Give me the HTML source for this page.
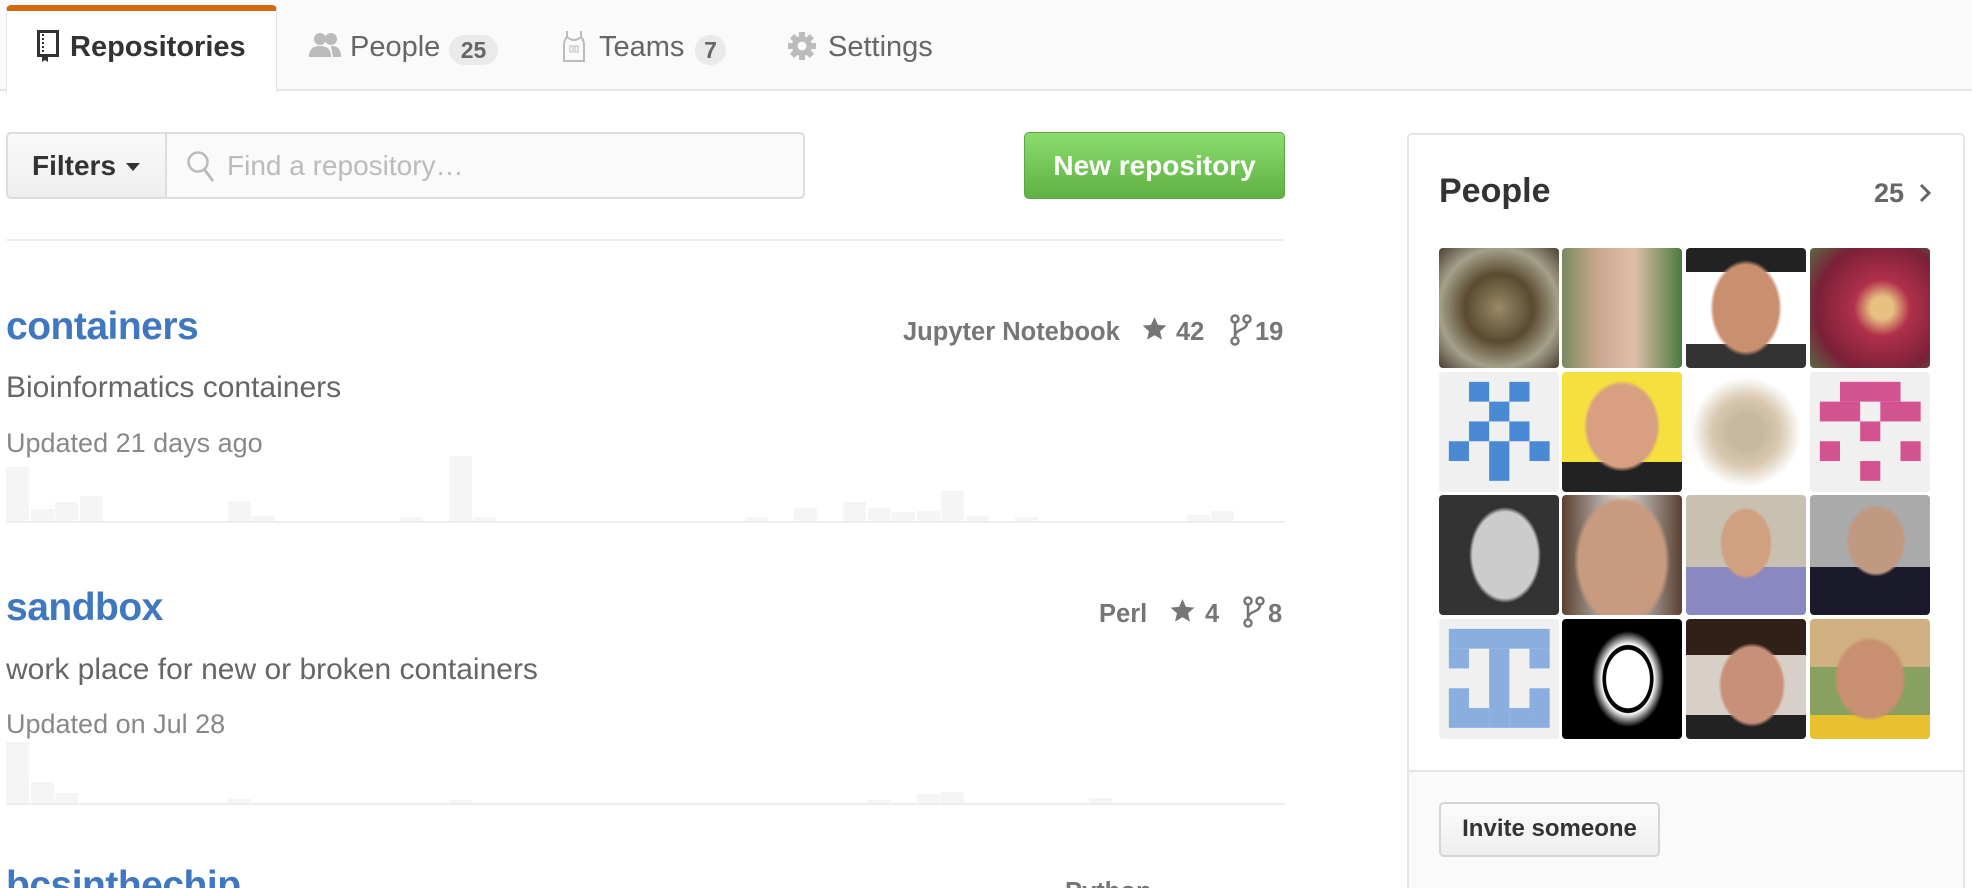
<!DOCTYPE html>
<html><head><meta charset="utf-8"><style>
*{box-sizing:border-box;margin:0;padding:0}
html,body{width:1972px;height:888px;overflow:hidden}
body{background:#fff;font-family:"Liberation Sans",Arial,sans-serif;position:relative;color:#333}
.a{position:absolute;white-space:nowrap}
.tabbar{position:absolute;left:0;top:0;width:1972px;height:91px;background:#fafafa;border-bottom:2px solid #e5e5e5}
.tab{position:absolute;left:6px;top:5px;width:271px;height:88px;background:#fff;border:1px solid #e5e5e5;border-bottom:none;border-top:6px solid #d26911;border-radius:5px 5px 0 0}
.tt{font-size:29px;color:#666;top:31px}
.cnt{background:#eaeaea;border-radius:20px;font-size:23px;font-weight:bold;color:#666;top:35px;height:30px;line-height:30px;text-align:center}
.title{color:#4078c0;font-size:39px;font-weight:bold;letter-spacing:-0.5px}
.desc{font-size:30px;color:#666}
.upd{font-size:27px;color:#888}
.meta{font-size:25.5px;font-weight:bold;color:#767676}
.bar{position:absolute;background:#f5f5f5;width:23px}
.hr{position:absolute;left:6px;width:1279px;height:2px;background:#eee}
</style></head><body>
<div class="tabbar"></div>
<div class="tab"></div>
<svg class="a" style="left:37px;top:30px" width="22" height="32" viewBox="0 0 22 32"><rect x="1.5" y="1.5" width="19" height="24" fill="none" stroke="#333" stroke-width="3"/><line x1="6" y1="4" x2="6" y2="22" stroke="#333" stroke-width="2" stroke-dasharray="2 2"/><path d="M5 25v7l3-2 3 2v-7" fill="#333"/></svg>
<div class="a tt" style="left:70px;font-weight:bold;color:#333">Repositories</div>
<svg class="a" style="left:309px;top:31px" width="32" height="28" viewBox="0 0 32 28"><circle cx="11" cy="8" r="6" fill="#bbb"/><circle cx="22" cy="8" r="6" fill="#bbb"/><path d="M0 26c0-8 4-11 11-11s11 3 11 11z M22 15c7 0 10 3 10 11h-8z" fill="#bbb"/></svg>
<div class="a tt" style="left:350px">People</div>
<div class="a cnt" style="left:449px;width:49px">25</div>
<svg class="a" style="left:563px;top:30px" width="22" height="32" viewBox="0 0 22 32"><path d="M4 1v6q-3 3-3 8v16h20V15q0-5-3-8V1M4 7q7 6 14 0" fill="none" stroke="#bbb" stroke-width="2"/><rect x="7" y="16" width="3" height="6" fill="none" stroke="#bbb"/><rect x="12" y="16" width="3" height="6" fill="none" stroke="#bbb"/></svg>
<div class="a tt" style="left:599px">Teams</div>
<div class="a cnt" style="left:695px;width:31px">7</div>
<svg class="a" style="left:788px;top:32px" width="28" height="28" viewBox="0 0 28 28"><g fill="#bbb"><circle cx="14" cy="14" r="10"/><rect x="11" y="0" width="6" height="28"/><rect x="0" y="11" width="28" height="6"/><rect x="11" y="0" width="6" height="28" transform="rotate(45 14 14)"/><rect x="11" y="0" width="6" height="28" transform="rotate(-45 14 14)"/></g><circle cx="14" cy="14" r="4.5" fill="#fafafa"/></svg>
<div class="a tt" style="left:828px">Settings</div>

<div class="a" style="left:6px;top:132px;width:799px;height:67px;border:2px solid #ddd;border-radius:5px;background:#fafafa"></div>
<div class="a" style="left:6px;top:132px;width:161px;height:67px;border:2px solid #ddd;border-radius:5px 0 0 5px;background:linear-gradient(#fafafa,#eee)"></div>
<div class="a" style="left:32px;top:150px;font-size:28px;font-weight:bold;color:#333">Filters</div>
<svg class="a" style="left:126px;top:163px" width="14" height="8"><path d="M0 0h14L7 8z" fill="#333"/></svg>
<svg class="a" style="left:186px;top:150px" width="30" height="34" viewBox="0 0 30 34"><circle cx="12" cy="12" r="9.5" fill="none" stroke="#bbb" stroke-width="2.5"/><path d="M18 19l9 12" stroke="#bbb" stroke-width="3"/></svg>
<div class="a" style="left:227px;top:150px;font-size:28px;color:#bbb">Find a repository…</div>

<div class="a" style="left:1024px;top:132px;width:261px;height:67px;border:1px solid #5aa745;border-radius:5px;background:linear-gradient(#8add6d,#60b044)"></div>
<div class="a" style="left:1024px;top:150px;width:261px;text-align:center;font-size:28px;font-weight:bold;color:#fff">New repository</div>

<div class="hr" style="top:239px"></div>

<div class="a title" style="left:6px;top:305px">containers</div>
<div class="a meta" style="left:903px;top:318px">Jupyter Notebook</div>
<svg class="a" style="left:1141px;top:316px" width="27" height="26" viewBox="0 0 24 24"><path d="M12 1l3.2 7.2 7.8.7-5.9 5.2 1.8 7.7L12 17.8 5.1 21.8l1.8-7.7L1 8.9l7.8-.7z" fill="#767676"/></svg>
<div class="a meta" style="left:1176px;top:318px">42</div>
<svg class="a" style="left:1230px;top:314px" width="22" height="32" viewBox="0 0 22 32"><g fill="none" stroke="#767676" stroke-width="2.5"><circle cx="5" cy="5" r="3.5"/><circle cx="17" cy="5" r="3.5"/><circle cx="5" cy="27" r="3.5"/><path d="M5 9v14M17 9c0 8-12 5-12 14"/></g></svg>
<div class="a meta" style="left:1255px;top:318px">19</div>
<div class="a desc" style="left:6px;top:371px">Bioinformatics containers</div>
<div class="a upd" style="left:6px;top:428px">Updated 21 days ago</div>
<div class="bar" style="left:6px;top:467px;height:54px"></div>
<div class="bar" style="left:31px;top:509px;height:12px"></div>
<div class="bar" style="left:55px;top:502px;height:19px"></div>
<div class="bar" style="left:80px;top:496px;height:25px"></div>
<div class="bar" style="left:228px;top:501px;height:20px"></div>
<div class="bar" style="left:252px;top:516px;height:5px"></div>
<div class="bar" style="left:400px;top:517px;height:4px"></div>
<div class="bar" style="left:449px;top:456px;height:65px"></div>
<div class="bar" style="left:473px;top:517px;height:4px"></div>
<div class="bar" style="left:745px;top:517px;height:4px"></div>
<div class="bar" style="left:794px;top:508px;height:13px"></div>
<div class="bar" style="left:843px;top:502px;height:19px"></div>
<div class="bar" style="left:868px;top:508px;height:13px"></div>
<div class="bar" style="left:892px;top:512px;height:9px"></div>
<div class="bar" style="left:917px;top:511px;height:10px"></div>
<div class="bar" style="left:941px;top:491px;height:30px"></div>
<div class="bar" style="left:966px;top:516px;height:5px"></div>
<div class="bar" style="left:1015px;top:517px;height:4px"></div>
<div class="bar" style="left:1187px;top:515px;height:6px"></div>
<div class="bar" style="left:1211px;top:511px;height:10px"></div>
<div class="hr" style="top:521px"></div>

<div class="a title" style="left:6px;top:586px">sandbox</div>
<div class="a meta" style="left:1099px;top:600px">Perl</div>
<svg class="a" style="left:1169px;top:598px" width="27" height="26" viewBox="0 0 24 24"><path d="M12 1l3.2 7.2 7.8.7-5.9 5.2 1.8 7.7L12 17.8 5.1 21.8l1.8-7.7L1 8.9l7.8-.7z" fill="#767676"/></svg>
<div class="a meta" style="left:1205px;top:600px">4</div>
<svg class="a" style="left:1243px;top:596px" width="22" height="32" viewBox="0 0 22 32"><g fill="none" stroke="#767676" stroke-width="2.5"><circle cx="5" cy="5" r="3.5"/><circle cx="17" cy="5" r="3.5"/><circle cx="5" cy="27" r="3.5"/><path d="M5 9v14M17 9c0 8-12 5-12 14"/></g></svg>
<div class="a meta" style="left:1268px;top:600px">8</div>
<div class="a desc" style="left:6px;top:653px">work place for new or broken containers</div>
<div class="a upd" style="left:6px;top:709px">Updated on Jul 28</div>
<div class="bar" style="left:6px;top:742px;height:61px"></div>
<div class="bar" style="left:31px;top:782px;height:21px"></div>
<div class="bar" style="left:55px;top:793px;height:10px"></div>
<div class="bar" style="left:228px;top:799px;height:4px"></div>
<div class="bar" style="left:449px;top:800px;height:3px"></div>
<div class="bar" style="left:868px;top:800px;height:3px"></div>
<div class="bar" style="left:917px;top:794px;height:9px"></div>
<div class="bar" style="left:941px;top:792px;height:11px"></div>
<div class="bar" style="left:1089px;top:798px;height:5px"></div>
<div class="hr" style="top:803px"></div>

<div class="a title" style="left:6px;top:864px">bcsinthechip</div>
<div class="a meta" style="left:1065px;top:878px">Python</div>

<div class="a" style="left:1407px;top:133px;width:558px;height:770px;border:2px solid #e5e5e5;border-radius:5px;background:#fff;overflow:hidden">
<div style="position:absolute;left:0;top:635px;width:100%;height:200px;background:#fafafa;border-top:2px solid #e5e5e5"></div>
</div>
<div class="a" style="left:1439px;top:172px;font-size:34px;font-weight:bold;color:#333">People</div>
<div class="a" style="left:1874px;top:178px;font-size:27px;font-weight:bold;color:#666">25</div>
<svg class="a" style="left:1918px;top:183px" width="14" height="20"><path d="M3 2l8 8-8 8" fill="none" stroke="#666" stroke-width="3"/></svg>

<div class="a" style="left:1439px;top:248px;width:120px;height:120px;border-radius:4px;background:radial-gradient(circle at 50% 50%,#9a8a6a,#5a4a30 40%,#a4a08a 70%,#4a4030)"></div>
<div class="a" style="left:1562px;top:248px;width:120px;height:120px;border-radius:4px;background:linear-gradient(90deg,#7a8a60,#c9a890 30%,#e0bfa8 60%,#4a7a40)"></div>
<div class="a" style="left:1686px;top:248px;width:120px;height:120px;border-radius:4px;background:radial-gradient(ellipse 30% 40% at 50% 50%,#c99070 90%,transparent 100%),linear-gradient(#222 20%,#fff 20%,#fff 80%,#333 80%)"></div>
<div class="a" style="left:1810px;top:248px;width:120px;height:120px;border-radius:4px;background:radial-gradient(circle at 60% 50%,#e8c080 12%,#b0304a 30%,#7a2038 70%,#5a6a40)"></div>

<svg class="a" style="left:1439px;top:372px" width="120" height="120" viewBox="0 0 10 10"><rect width="10" height="10" rx=".3" fill="#f0f0f0"/><g fill="#4a89d4"><rect x="2.5" y="0.82" width="1.68" height="1.65"/><rect x="5.86" y="0.82" width="1.68" height="1.65"/><rect x="4.18" y="2.47" width="1.68" height="1.65"/><rect x="2.5" y="4.12" width="1.68" height="1.65"/><rect x="5.86" y="4.12" width="1.68" height="1.65"/><rect x="0.82" y="5.77" width="1.68" height="1.65"/><rect x="4.18" y="5.77" width="1.68" height="3.3"/><rect x="7.54" y="5.77" width="1.68" height="1.65"/></g></svg>
<div class="a" style="left:1562px;top:372px;width:120px;height:120px;border-radius:4px;background:radial-gradient(ellipse 32% 38% at 50% 45%,#d8a080 90%,transparent 100%),linear-gradient(#f5e040 75%,#222 75%)"></div>
<div class="a" style="left:1686px;top:372px;width:120px;height:120px;border-radius:4px;background:radial-gradient(circle,#c8b8a0 20%,#d8c8b0 40%,#fff 65%)"></div>
<svg class="a" style="left:1810px;top:372px" width="120" height="120" viewBox="0 0 10 10"><rect width="10" height="10" rx=".3" fill="#f0f0f0"/><g fill="#d35390"><rect x="2.5" y="0.82" width="5.04" height="1.65"/><rect x="0.82" y="2.47" width="3.36" height="1.65"/><rect x="5.86" y="2.47" width="3.36" height="1.65"/><rect x="4.18" y="4.12" width="1.68" height="1.65"/><rect x="0.82" y="5.77" width="1.68" height="1.65"/><rect x="7.54" y="5.77" width="1.68" height="1.65"/><rect x="4.18" y="7.42" width="1.68" height="1.65"/></g></svg>

<div class="a" style="left:1439px;top:495px;width:120px;height:120px;border-radius:4px;background:radial-gradient(ellipse 30% 40% at 55% 50%,#ccc 90%,transparent 100%),#333"></div>
<div class="a" style="left:1562px;top:495px;width:120px;height:120px;border-radius:4px;background:radial-gradient(ellipse 40% 55% at 50% 55%,#c89a80 90%,transparent 100%),linear-gradient(90deg,#5a4030,#ddd 50%,#5a4030)"></div>
<div class="a" style="left:1686px;top:495px;width:120px;height:120px;border-radius:4px;background:radial-gradient(ellipse 22% 30% at 50% 40%,#d0a080 90%,transparent 100%),linear-gradient(#c8c0b0 60%,#8a88c0 60%)"></div>
<div class="a" style="left:1810px;top:495px;width:120px;height:120px;border-radius:4px;background:radial-gradient(ellipse 25% 30% at 55% 38%,#c09a80 90%,transparent 100%),linear-gradient(#aaa 60%,#1a1a2a 60%)"></div>

<svg class="a" style="left:1439px;top:619px" width="120" height="120" viewBox="0 0 10 10"><rect width="10" height="10" rx=".3" fill="#f0f0f0"/><g fill="#8aaedd"><rect x="0.82" y="0.82" width="8.4" height="1.65"/><rect x="0.82" y="2.47" width="1.68" height="1.65"/><rect x="4.18" y="2.47" width="1.68" height="6.6"/><rect x="7.54" y="2.47" width="1.68" height="1.65"/><rect x="0.82" y="5.77" width="1.68" height="3.3"/><rect x="2.5" y="7.42" width="1.68" height="1.65"/><rect x="7.54" y="5.77" width="1.68" height="3.3"/><rect x="5.86" y="7.42" width="1.68" height="1.65"/></g></svg>
<div class="a" style="left:1562px;top:619px;width:120px;height:120px;border-radius:4px;background:radial-gradient(ellipse 30% 40% at 55% 50%,#fff 60%,#000 62%,#000 70%,#fff 72%,#000 100%)"></div>
<div class="a" style="left:1686px;top:619px;width:120px;height:120px;border-radius:4px;background:radial-gradient(ellipse 28% 35% at 55% 55%,#c89078 90%,transparent 100%),linear-gradient(#302018 30%,#d8d0c8 30%,#d8d0c8 80%,#222 80%)"></div>
<div class="a" style="left:1810px;top:619px;width:120px;height:120px;border-radius:4px;background:radial-gradient(ellipse 30% 35% at 50% 50%,#c89070 90%,transparent 100%),linear-gradient(#d0b080 40%,#88a060 40%,#88a060 80%,#e8c030 80%)"></div>

<div class="a" style="left:1439px;top:802px;width:221px;height:55px;border:2px solid #d5d5d5;border-radius:5px;background:linear-gradient(#fcfcfc,#eee)"></div>
<div class="a" style="left:1439px;top:815px;width:221px;text-align:center;font-size:24px;font-weight:bold;color:#333">Invite someone</div>
</body></html>
